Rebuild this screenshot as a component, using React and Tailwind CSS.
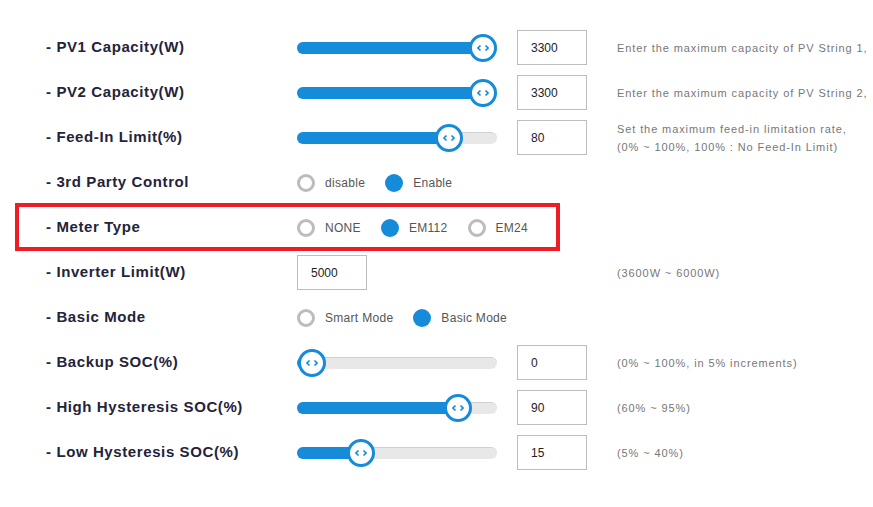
const rows = [
    { label: "PV1 Capacity(W)", type: "slider", pos: 172, value: "3300", help: ["Enter the maximum capacity of PV String 1,"] },
    { label: "PV2 Capacity(W)", type: "slider", pos: 172, value: "3300", help: ["Enter the maximum capacity of PV String 2,"] },
    { label: "Feed-In Limit(%)", type: "slider", pos: 138, value: "80", help: ["Set the maximum feed-in limitation rate,", "(0% ~ 100%, 100% : No Feed-In Limit)"] },
    { label: "3rd Party Control", type: "radio", options: ["disable", "Enable"], selected: 1 },
    { label: "Meter Type", type: "radio", options: ["NONE", "EM112", "EM24"], selected: 1, highlight: true },
    { label: "Inverter Limit(W)", type: "input", value: "5000", help: ["(3600W ~ 6000W)"] },
    { label: "Basic Mode", type: "radio", options: ["Smart Mode", "Basic Mode"], selected: 1 },
    { label: "Backup SOC(%)", type: "slider", pos: 1, value: "0", help: ["(0% ~ 100%, in 5% increments)"] },
    { label: "High Hysteresis SOC(%)", type: "slider", pos: 147, value: "90", help: ["(60% ~ 95%)"] },
    { label: "Low Hysteresis SOC(%)", type: "slider", pos: 50, value: "15", help: ["(5% ~ 40%)"] },
];

const font = { fontFamily: '"Liberation Sans", Arial, sans-serif' };

const Slider = ({ pos }) => {
    // pos: px offset of thumb centre from its minimum position (0..172)
    return (
        <div className="relative w-[200px] h-[28px] flex items-center">
            <div className="w-full h-[12px] rounded-full bg-[#e8e8e8] border-t border-[#d0d0d0]"></div>
            <div className="absolute left-0 h-[12px] rounded-full bg-[#168bd9]" style={{ width: pos + 14 }}></div>
            <div
                className="absolute top-0 w-[28px] h-[28px] rounded-full bg-white border-[3px] border-[#168bd9] flex items-center justify-center"
                style={{ left: pos }}
            >
                <svg width="12" height="8" viewBox="0 0 12 8" fill="none" stroke="#168bd9" strokeWidth="1.6">
                    <path d="M3.5 1.5 L1 4 L3.5 6.5" />
                    <path d="M8.5 1.5 L11 4 L8.5 6.5" />
                </svg>
            </div>
        </div>
    );
};

const Box = ({ value }) => (
    <div className="w-[70px] h-[35px] border border-[#bdbdbd] flex items-center pl-[13px] text-[12px] text-[#222]">
        {value}
    </div>
);

const Radios = ({ options, selected }) => (
    <div className="flex items-center gap-[20px]">
        {options.map((o, i) => (
            <div key={o} className="flex items-center gap-[10px]">
                {i === selected ? (
                    <span className="w-[18px] h-[18px] rounded-full bg-[#168bd9]"></span>
                ) : (
                    <span className="w-[18px] h-[18px] rounded-full border-[3px] border-[#bcbcbc]"></span>
                )}
                <span className="text-[12px] text-[#555] tracking-[0.3px]">{o}</span>
            </div>
        ))}
    </div>
);

export default function App() {
    return (
        <div className="w-[873px] h-[507px] bg-white pt-[25px]" style={font}>
            {rows.map((r) => (
                <div key={r.label} className="relative flex items-center h-[45px]">
                    {r.highlight && (
                        <div className="absolute left-[15px] top-[-2px] w-[545px] h-[48px] border-[4px] border-[#ee1c25]"></div>
                    )}
                    <div className="w-[297px] pl-[46px] text-[15px] font-semibold text-[#23233a] tracking-[0.6px]">
                        - {r.label}
                    </div>
                    <div className="w-[320px] flex items-center">
                        {r.type === "slider" && (
                            <>
                                <Slider pos={r.pos} />
                                <div className="ml-[20px]"><Box value={r.value} /></div>
                            </>
                        )}
                        {r.type === "radio" && <Radios options={r.options} selected={r.selected} />}
                        {r.type === "input" && <Box value={r.value} />}
                    </div>
                    {r.help && (
                        <div className="text-[11px] leading-[18px] text-[#777] tracking-[0.9px] whitespace-nowrap">
                            {r.help.map((h) => (
                                <div key={h}>{h}</div>
                            ))}
                        </div>
                    )}
                </div>
            ))}
        </div>
    );
}
